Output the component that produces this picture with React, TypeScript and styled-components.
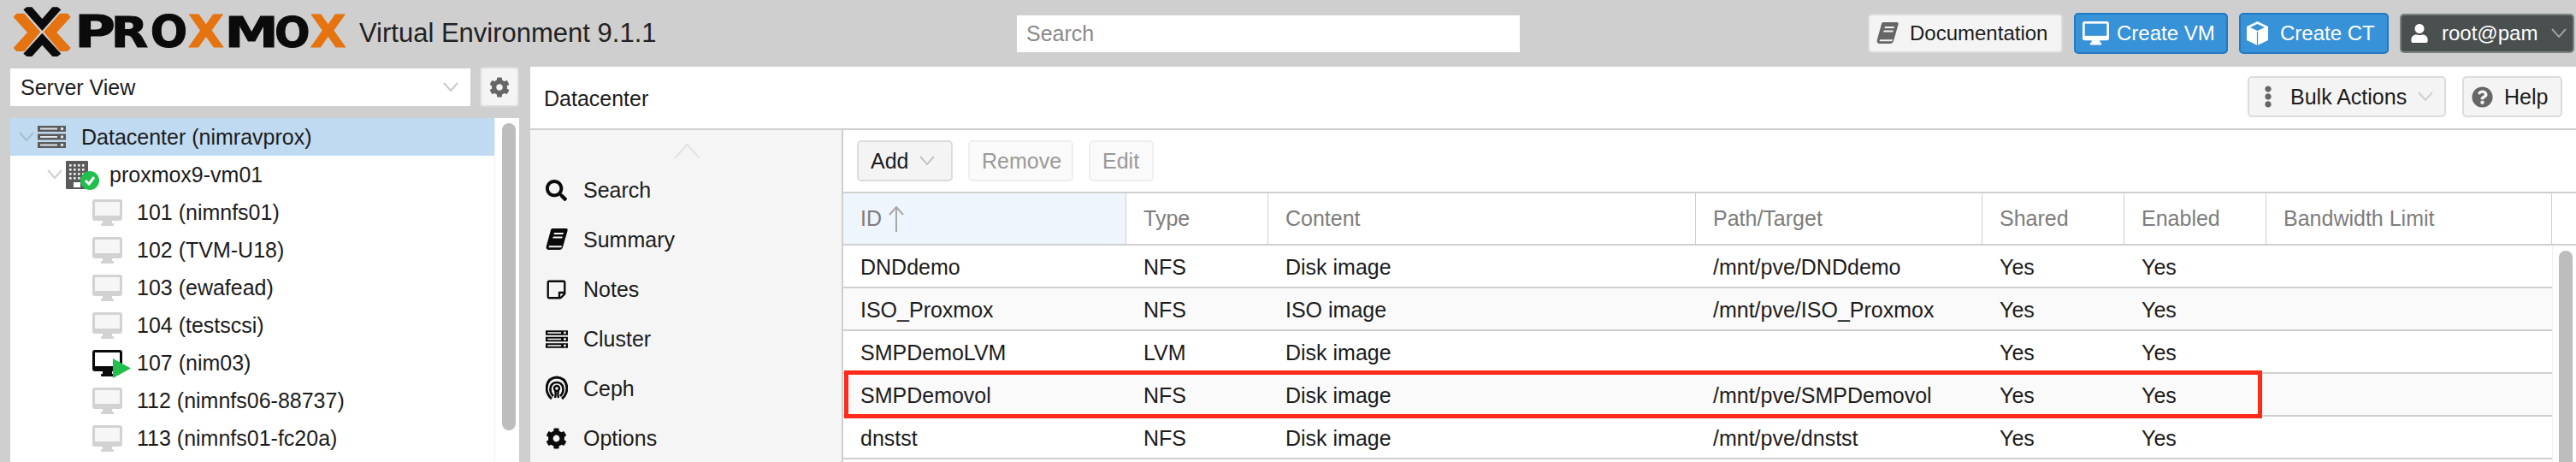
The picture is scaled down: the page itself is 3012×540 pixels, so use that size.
import React from "react";
import styled, { createGlobalStyle } from "styled-components";
import {
  FaCog,
  FaEllipsisV,
  FaQuestionCircle,
  FaRegStickyNote,
  FaSearch,
  FaUser,
} from "react-icons/fa";

const GlobalStyle = createGlobalStyle`
  html, body {
    margin: 0;
    padding: 0;
    background: #fff;
  }
  body {
    font-family: "Liberation Sans", Arial, sans-serif;
    font-size: 25px;
    color: #1c1c1c;
  }
`;

const Page = styled.div`
  width: 3012px;
  height: 540px;
  overflow: hidden;
  display: flex;
  flex-direction: column;
  background: #cfcfcf;
`;

const Header = styled.header`
  height: 78px;
  flex: none;
  display: flex;
  align-items: center;
  padding-right: 2px;
`;

const LogoBox = styled.svg`
  width: 420px;
  height: 78px;
  flex: none;
`;

const LogoLetter = styled.text`
  font-family: "DejaVu Sans", sans-serif;
  font-weight: 700;
  font-size: 152px;
  stroke-width: 3px;
`;

const Version = styled.div`
  font-size: 31px;
  width: 769px;
  flex: none;
  color: #222;
`;

const SearchField = styled.div`
  width: 588px;
  height: 43px;
  flex: none;
  box-sizing: border-box;
  background: #fff;
  padding-left: 11px;
  display: flex;
  align-items: center;
  color: #8a8a8a;
`;

const HeaderActions = styled.div`
  margin-left: auto;
  display: flex;
  align-items: center;
  gap: 13px;
  font-size: 24px;
`;

const Btn = styled.div<{ $w: number; $h?: number; $tone?: "plain" | "blue" | "dark" | "off" }>`
  width: ${(p) => p.$w}px;
  height: ${(p) => p.$h ?? 48}px;
  flex: none;
  box-sizing: border-box;
  border-radius: 5px;
  display: flex;
  align-items: center;
  gap: 13px;
  padding-left: 14px;
  white-space: nowrap;
  border: 2px solid
    ${(p) =>
      p.$tone === "blue"
        ? "#2279c4"
        : p.$tone === "dark"
          ? "#79817f"
          : p.$tone === "off"
            ? "#eeeeee"
            : "#dcdcdc"};
  background: ${(p) =>
    p.$tone === "blue"
      ? "#3892d8"
      : p.$tone === "dark"
        ? "#4a4f4f"
        : p.$tone === "off"
          ? "#fafafa"
          : "#f4f4f4"};
  color: ${(p) =>
    p.$tone === "blue" || p.$tone === "dark"
      ? "#fff"
      : p.$tone === "off"
        ? "#999"
        : "#1c1c1c"};
`;

const BtnIcon = styled.span<{ $color?: string; $size?: number; $ml?: number; $mr?: number }>`
  display: flex;
  color: ${(p) => p.$color ?? "#666"};
  font-size: ${(p) => p.$size ?? 26}px;
  margin-left: ${(p) => p.$ml ?? 0}px;
  margin-right: ${(p) => p.$mr ?? 0}px;
`;

const Caret = styled.svg<{ $color?: string; $push?: number }>`
  width: 18px;
  height: 12px;
  flex: none;
  margin-left: ${(p) => p.$push ?? 0}px;
  stroke: ${(p) => p.$color ?? "#c4c4c4"};
  stroke-width: 2;
  fill: none;
`;

const Body = styled.div`
  flex: 1;
  min-height: 0;
  display: flex;
`;

const LeftPane = styled.aside`
  width: 620px;
  flex: none;
  box-sizing: border-box;
  padding: 2px 13px 0 12px;
  display: flex;
  flex-direction: column;
  gap: 14px;
`;

const SelectorRow = styled.div`
  display: flex;
  align-items: flex-start;
  justify-content: space-between;
  height: 44px;
`;

const Selector = styled.div`
  width: 538px;
  height: 44px;
  box-sizing: border-box;
  background: #fff;
  padding: 0 14px 0 12px;
  display: flex;
  align-items: center;
  justify-content: space-between;
`;

const GearBtn = styled.div`
  width: 46px;
  height: 47px;
  margin-top: -2px;
  box-sizing: border-box;
  border: 2px solid #dcdcdc;
  border-radius: 4px;
  background: #f4f4f4;
  color: #666;
  font-size: 24px;
  display: flex;
  align-items: center;
  justify-content: center;
`;

const Tree = styled.div`
  flex: 1;
  min-height: 0;
  display: flex;
  background: #fff;
`;

const TreeRows = styled.div`
  width: 566px;
  flex: none;
`;

const TreeRow = styled.div<{ $depth: number; $selected?: boolean }>`
  height: 44px;
  display: flex;
  align-items: center;
  padding-left: ${(p) => 10 + p.$depth * 33}px;
  background: ${(p) => (p.$selected ? "#bfdaf1" : "transparent")};
`;

const TreeExpander = styled.span`
  width: 22px;
  flex: none;
  display: flex;
`;

const TreeIcon = styled.span`
  width: 51px;
  flex: none;
  display: flex;
  position: relative;
`;

const VmIcon = styled.span`
  width: 52px;
  margin-left: 31px;
  flex: none;
  display: flex;
  position: relative;
`;

const PlayBadge = styled.svg`
  position: absolute;
  left: 24px;
  top: 10px;
  width: 21px;
  height: 23px;
`;

const CheckBadge = styled.svg`
  position: absolute;
  left: 17px;
  top: 12px;
  width: 22px;
  height: 22px;
`;

const ScrollTrack = styled.div<{ $w: number }>`
  width: ${(p) => p.$w}px;
  flex: none;
  box-sizing: border-box;
  border-left: 1px solid #f0f0f0;
  padding: 6px 0 0 ${(p) => p.$w - 21}px;
  background: #fff;
`;

const ScrollThumb = styled.div<{ $h: number }>`
  width: 16px;
  height: ${(p) => p.$h}px;
  background: #bdbdbd;
  border-radius: 8px;
`;

const Main = styled.main`
  flex: 1;
  min-width: 0;
  display: flex;
  flex-direction: column;
  background: #fff;
`;

const TitleBar = styled.div`
  height: 74px;
  flex: none;
  box-sizing: border-box;
  border-bottom: 2px solid #cfcfcf;
  display: flex;
  align-items: center;
  padding: 0 16px 2px 16px;
  gap: 19px;
`;

const Title = styled.div`
  margin-right: auto;
  padding-top: 4px;
`;

const Content = styled.div`
  flex: 1;
  min-height: 0;
  display: flex;
`;

const SideMenu = styled.nav`
  width: 366px;
  flex: none;
  box-sizing: border-box;
  background: #f5f5f5;
  border-right: 2px solid #cfcfcf;
`;

const MenuUp = styled.div`
  height: 41px;
  box-sizing: border-box;
  padding: 8px 0 0 2px;
  display: flex;
  align-items: center;
  justify-content: center;
`;

const MenuItem = styled.div`
  height: 58px;
  display: flex;
  align-items: center;
  padding-left: 18px;
`;

const MenuIcon = styled.span`
  width: 44px;
  flex: none;
  display: flex;
  color: #0a0a0a;
  font-size: 25px;
`;

const GridPane = styled.section`
  flex: 1;
  min-width: 0;
  display: flex;
  flex-direction: column;
`;

const Toolbar = styled.div`
  height: 72px;
  flex: none;
  box-sizing: border-box;
  padding-top: 12px;
  padding-left: 16px;
  display: flex;
  align-items: flex-start;
  gap: 18px;
`;

const GridHead = styled.div`
  height: 63px;
  flex: none;
  box-sizing: border-box;
  border-top: 2px solid #cfcfcf;
  border-bottom: 2px solid #cfcfcf;
  display: flex;
`;

const HeadCell = styled.div<{ $w: number; $active?: boolean }>`
  width: ${(p) => p.$w}px;
  flex: none;
  box-sizing: border-box;
  padding-left: 20px;
  display: flex;
  align-items: center;
  gap: 8px;
  color: #7d7d7d;
  border-right: 1px solid #cfcfcf;
  background: ${(p) => (p.$active ? "#eef5fc" : "transparent")};
`;

const GridBody = styled.div`
  flex: 1;
  min-height: 0;
  display: flex;
`;

const Rows = styled.div`
  width: 1998px;
  flex: none;
  position: relative;
`;

const Row = styled.div<{ $alt: boolean }>`
  height: 50px;
  box-sizing: border-box;
  padding-top: 3px;
  border-bottom: 2px solid #cfcfcf;
  display: flex;
  align-items: center;
  background: ${(p) => (p.$alt ? "#fafafa" : "#fff")};
`;

const Cell = styled.div<{ $w: number }>`
  width: ${(p) => p.$w}px;
  flex: none;
  box-sizing: border-box;
  padding-left: 20px;
  white-space: nowrap;
`;

const Highlight = styled.div`
  position: absolute;
  left: 1px;
  top: 146px;
  width: 1658px;
  height: 56px;
  box-sizing: border-box;
  border: 5px solid #ff2a1a;
  pointer-events: none;
`;

const CaretDown = ({ color, push }: { color?: string; push?: number }) => (
  <Caret viewBox="0 0 18 12" $color={color} $push={push}>
    <polyline points="1,1 9,10 17,1" />
  </Caret>
);

const Monitor = ({ color, screen, w = 35 }: { color: string; screen: string; w?: number }) => (
  <svg width={w} height={(w * 31) / 35} viewBox="0 0 35 31">
    <rect x="0" y="0" width="35" height="25" rx="3" fill={color} />
    <rect x="3" y="3" width="29" height="16" fill={screen} />
    <rect x="12" y="25" width="11" height="4" fill={color} />
    <rect x="10" y="28" width="15" height="3" rx="1" fill={color} />
  </svg>
);

const Book = ({ color, bg, size = 26 }: { color: string; bg: string; size?: number }) => (
  <svg width={size} height={size + 2} viewBox="0 0 26 28">
    <path
      fill={color}
      d="M8 1h16c1.5 0 2 1 1.6 2.4L20 23c-.6 2-2 3-4 3H4c-2.4 0-4-2-3-5L6 3c.3-1.2 1-2 2-2z"
    />
    <path fill={bg} d="M10 6h11l-.6 2H9.4zM8.8 10.5h11l-.6 2H8.2zM4 21.2h15l-.6 2H3.6z" />
  </svg>
);

const Cube = () => (
  <svg width="27" height="30" viewBox="0 0 27 30">
    <polygon points="13.5,1 26,7 26,23 13.5,29 1,23 1,7" fill="#fff" />
    <polygon points="13.5,4 22,8 13.5,12 5,8" fill="#3892d8" />
    <line x1="13.5" y1="13" x2="13.5" y2="29" stroke="#3892d8" strokeWidth="1.2" />
  </svg>
);

const Rack = ({ w, h, color, hole }: { w: number; h: number; color: string; hole: string }) => (
  <svg width={w} height={h} viewBox="0 0 33 26">
    {[0, 9.5, 19].map((y) => (
      <g key={y}>
        <rect x="0" y={y} width="33" height="7" fill={color} />
        <rect x="3" y={y + 2.5} width="20" height="2" fill={hole} />
        <circle cx="28.5" cy={y + 3.5} r="1.8" fill={hole} />
      </g>
    ))}
  </svg>
);

const CephIcon = () => (
  <svg width="26" height="30" viewBox="0 0 26 30" fill="none" stroke="#0a0a0a">
    <path d="M7 27 C-2 20 -1 3 13 2 C27 3 28 20 19 27" strokeWidth="3" />
    <path d="M9 24 C3 18 5 8 13 8 C21 8 23 18 17 24" strokeWidth="2.6" />
    <path d="M11 26 C12 22 12 20 11 18" strokeWidth="2.4" />
    <path d="M15 26 C14 22 14 20 15 18" strokeWidth="2.4" />
    <circle cx="13" cy="15" r="3" strokeWidth="2.4" />
  </svg>
);

const NodeIcon = () => (
  <svg width="26" height="33" viewBox="0 0 26 33">
    <rect x="0" y="0" width="26" height="33" rx="1" fill="#5a5a5a" />
    {[4, 9, 14, 19].map((y) =>
      [4, 9, 14, 19].map((x) => (
        <rect key={`${x}-${y}`} x={x} y={y} width="2.6" height="2.6" fill="#eee" />
      ))
    )}
    <rect x="9" y="25" width="8" height="6" fill="#fff" />
  </svg>
);

const BLACK = "#0b0b0b";
const ORANGE = "#e57310";

// glyph, ink left, ink width wanted, then DejaVu Bold bearing and ink width in em
const letters: [string, number, number, number, number, string][] = [
  ["P", 280, 115, 0.092, 0.588, BLACK],
  ["R", 405, 115, 0.092, 0.678, BLACK],
  ["O", 535, 115, 0.05, 0.75, BLACK],
  ["X", 662, 123, 0.01, 0.755, ORANGE],
  ["M", 805, 155, 0.092, 0.811, BLACK],
  ["O", 970, 110, 0.05, 0.75, BLACK],
  ["X", 1090, 123, 0.01, 0.755, ORANGE],
];

const Logo = () => (
  <LogoBox viewBox="0 0 1260 234">
    <polygon fill={ORANGE} points="47,60 58,47 85,47 142,112 85,180 58,180 47,168 96,114" />
    <polygon fill={ORANGE} points="248,60 237,47 210,47 153,112 210,180 237,180 248,168 199,114" />
    <polygon fill={BLACK} points="82,34 94,25 112,25 148,66 184,25 202,25 214,34 148,108" />
    <polygon fill={BLACK} points="82,188 94,198 112,198 148,158 184,198 202,198 214,188 148,116" />
    {letters.map(([ch, x, len, lsb, ink, fill], i) => {
      const sx = len / (ink * 152);
      return (
        <LogoLetter
          key={i}
          fill={fill}
          stroke={fill}
          transform={`translate(${x - lsb * 152 * sx} 165) scale(${sx} 1)`}
        >
          {ch}
        </LogoLetter>
      );
    })}
  </LogoBox>
);

const columns = [331, 166, 500, 335, 166, 166, 334];

const storages = [
  ["DNDdemo", "NFS", "Disk image", "/mnt/pve/DNDdemo"],
  ["ISO_Proxmox", "NFS", "ISO image", "/mnt/pve/ISO_Proxmox"],
  ["SMPDemoLVM", "LVM", "Disk image", ""],
  ["SMPDemovol", "NFS", "Disk image", "/mnt/pve/SMPDemovol"],
  ["dnstst", "NFS", "Disk image", "/mnt/pve/dnstst"],
];

const guests = [
  { label: "101 (nimnfs01)" },
  { label: "102 (TVM-U18)" },
  { label: "103 (ewafead)" },
  { label: "104 (testscsi)" },
  { label: "107 (nim03)", running: true },
  { label: "112 (nimnfs06-88737)" },
  { label: "113 (nimnfs01-fc20a)" },
];

const menu: [string, React.ReactNode][] = [
  ["Search", <FaSearch key="s" />],
  ["Summary", <Book key="b" color="#0a0a0a" bg="#f5f5f5" />],
  ["Notes", <FaRegStickyNote key="n" />],
  ["Cluster", <Rack key="c" w={26} h={21} color="#0a0a0a" hole="#f5f5f5" />],
  ["Ceph", <CephIcon key="p" />],
  ["Options", <FaCog key="o" />],
];

const App: React.FC = () => {
  return (
    <Page>
      <GlobalStyle />
      <Header>
        <Logo />
        <Version>Virtual Environment 9.1.1</Version>
        <SearchField>Search</SearchField>
        <HeaderActions>
          <Btn $w={228} $h={46}>
            <BtnIcon $ml={-6}><Book color="#666" bg="#f4f4f4" /></BtnIcon>
            Documentation
          </Btn>
          <Btn $w={180} $tone="blue">
            <BtnIcon $ml={-6} $mr={-4}>
              <Monitor color="#fff" screen="#3892d8" w={31} />
            </BtnIcon>
            Create VM
          </Btn>
          <Btn $w={175} $tone="blue">
            <BtnIcon $ml={-8}><Cube /></BtnIcon>
            Create CT
          </Btn>
          <Btn $w={204} $h={46} $tone="dark">
            <BtnIcon $color="#fff" $size={22} $ml={-4} $mr={2}><FaUser /></BtnIcon>
            root@pam
            <CaretDown color="#9a9f9f" push={3} />
          </Btn>
        </HeaderActions>
      </Header>
      <Body>
        <LeftPane>
          <SelectorRow>
            <Selector>
              Server View
              <CaretDown color="#c8c8c8" />
            </Selector>
            <GearBtn><FaCog /></GearBtn>
          </SelectorRow>
          <Tree>
            <TreeRows>
              <TreeRow $depth={0} $selected>
                <TreeExpander><CaretDown color="#a9bdcd" /></TreeExpander>
                <TreeIcon><Rack w={33} h={26} color="#5a5a5a" hole="#dfe6ec" /></TreeIcon>
                Datacenter (nimravprox)
              </TreeRow>
              <TreeRow $depth={1}>
                <TreeExpander><CaretDown color="#cfcfcf" /></TreeExpander>
                <TreeIcon>
                  <NodeIcon />
                  <CheckBadge viewBox="0 0 22 22">
                    <circle cx="11" cy="11" r="11" fill="#21bf4b" />
                    <polyline
                      points="6,11 10,15 16,7"
                      fill="none"
                      stroke="#fff"
                      strokeWidth="3"
                    />
                  </CheckBadge>
                </TreeIcon>
                proxmox9-vm01
              </TreeRow>
              {guests.map((g) => (
                <TreeRow key={g.label} $depth={1}>
                  <TreeExpander />
                  <VmIcon>
                    {g.running ? (
                      <>
                        <Monitor color="#0a0a0a" screen="#fff" />
                        <PlayBadge viewBox="0 0 21 23">
                          <polygon points="0,0 21,11.5 0,23" fill="#21bf4b" />
                        </PlayBadge>
                      </>
                    ) : (
                      <Monitor color="#d2d2d2" screen="#f6f6f6" />
                    )}
                  </VmIcon>
                  {g.label}
                </TreeRow>
              ))}
            </TreeRows>
            <ScrollTrack $w={29}>
              <ScrollThumb $h={359} />
            </ScrollTrack>
          </Tree>
        </LeftPane>
        <Main>
          <TitleBar>
            <Title>Datacenter</Title>
            <Btn $w={232}>
              <BtnIcon $ml={-5}><FaEllipsisV /></BtnIcon>
              Bulk Actions
              <CaretDown color="#d0d0d0" />
            </Btn>
            <Btn $w={117} $h={48}>
              <BtnIcon $size={25} $ml={-5}><FaQuestionCircle /></BtnIcon>
              Help
            </Btn>
          </TitleBar>
          <Content>
            <SideMenu>
              <MenuUp>
                <svg width="31" height="18" viewBox="0 0 31 18" fill="none" stroke="#e2e2e2" strokeWidth="2">
                  <polyline points="1,17 15.5,1 30,17" />
                </svg>
              </MenuUp>
              {menu.map(([label, icon]) => (
                <MenuItem key={label}>
                  <MenuIcon>{icon}</MenuIcon>
                  {label}
                </MenuItem>
              ))}
            </SideMenu>
            <GridPane>
              <Toolbar>
                <Btn $w={112}>
                  Add
                  <CaretDown color="#c4c4c4" />
                </Btn>
                <Btn $w={123} $tone="off">Remove</Btn>
                <Btn $w={76} $tone="off">Edit</Btn>
              </Toolbar>
              <GridHead>
                <HeadCell $w={columns[0]} $active>
                  ID
                  <svg width="18" height="30" viewBox="0 0 18 30" fill="none" stroke="#a8a8a8" strokeWidth="2">
                    <polyline points="1,10 9,1 17,10" />
                    <line x1="9" y1="1" x2="9" y2="30" />
                  </svg>
                </HeadCell>
                <HeadCell $w={columns[1]}>Type</HeadCell>
                <HeadCell $w={columns[2]}>Content</HeadCell>
                <HeadCell $w={columns[3]}>Path/Target</HeadCell>
                <HeadCell $w={columns[4]}>Shared</HeadCell>
                <HeadCell $w={columns[5]}>Enabled</HeadCell>
                <HeadCell $w={columns[6]}>Bandwidth Limit</HeadCell>
              </GridHead>
              <GridBody>
                <Rows>
                  {storages.map((s, i) => (
                    <Row key={s[0]} $alt={i % 2 === 1}>
                      <Cell $w={columns[0]}>{s[0]}</Cell>
                      <Cell $w={columns[1]}>{s[1]}</Cell>
                      <Cell $w={columns[2]}>{s[2]}</Cell>
                      <Cell $w={columns[3]}>{s[3]}</Cell>
                      <Cell $w={columns[4]}>Yes</Cell>
                      <Cell $w={columns[5]}>Yes</Cell>
                    </Row>
                  ))}
                  <Highlight />
                </Rows>
                <ScrollTrack $w={28}>
                  <ScrollThumb $h={300} />
                </ScrollTrack>
              </GridBody>
            </GridPane>
          </Content>
        </Main>
      </Body>
    </Page>
  );
};

export default App;
